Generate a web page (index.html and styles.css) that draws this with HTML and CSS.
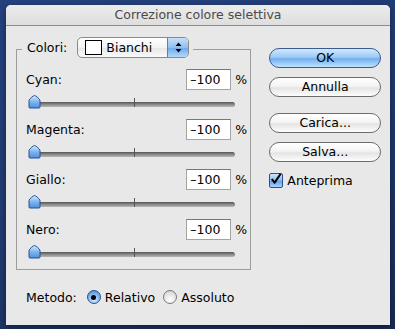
FILE: index.html
```html
<!DOCTYPE html>
<html lang="it">
<head>
  <meta charset="UTF-8">
  <meta name="viewport" content="width=device-width, initial-scale=1.0">
  <title>Correzione colore selettiva</title>
  <link rel="stylesheet" href="styles.css">
</head>
<body>
  <div class="finestra">
    <div class="barra-titolo">Correzione colore selettiva</div>
    <div class="contenuto">
      <div class="colonna-sinistra">
        <div class="gruppo">
          <div class="gruppo-testa">
            <span>Colori:</span>
            <div class="popup">
              <span class="campione"></span>
              <span class="popup-testo">Bianchi</span>
              <span class="popup-frecce">
                <svg width="7" height="11" viewBox="0 0 7 11"><path d="M3.5 0.5 L6.5 4 L0.5 4 Z M0.5 7 L6.5 7 L3.5 10.5 Z" fill="#000"/></svg>
              </span>
            </div>
          </div>

          <div class="riga">
            <div class="riga-alto"><span class="etichetta">Cyan:</span><span class="campo">–100</span><span class="perc">%</span></div>
            <div class="cursore"><span class="binario"></span><span class="tacca"></span><svg class="pomello" width="13" height="15" viewBox="0 0 13 15"><defs><linearGradient id="gb1" x1="0" y1="0" x2="0" y2="1"><stop offset="0" stop-color="#d6ebff"/><stop offset="0.5" stop-color="#7fb5ee"/><stop offset="1" stop-color="#4e8fe0"/></linearGradient></defs><path d="M6.5 1.5 C7.5 1.5 12 5 12 6.5 L12 13 Q12 14 11 14 L2 14 Q1 14 1 13 L1 6.5 C1 5 5.5 1.5 6.5 1.5 Z" fill="url(#gb1)" stroke="#2b4f8f" stroke-width="1"/></svg></div>
          </div>

          <div class="riga">
            <div class="riga-alto"><span class="etichetta">Magenta:</span><span class="campo">–100</span><span class="perc">%</span></div>
            <div class="cursore"><span class="binario"></span><span class="tacca"></span><svg class="pomello" width="13" height="15" viewBox="0 0 13 15"><path d="M6.5 1.5 C7.5 1.5 12 5 12 6.5 L12 13 Q12 14 11 14 L2 14 Q1 14 1 13 L1 6.5 C1 5 5.5 1.5 6.5 1.5 Z" fill="url(#gb1)" stroke="#2b4f8f" stroke-width="1"/></svg></div>
          </div>

          <div class="riga">
            <div class="riga-alto"><span class="etichetta">Giallo:</span><span class="campo">–100</span><span class="perc">%</span></div>
            <div class="cursore"><span class="binario"></span><span class="tacca"></span><svg class="pomello" width="13" height="15" viewBox="0 0 13 15"><path d="M6.5 1.5 C7.5 1.5 12 5 12 6.5 L12 13 Q12 14 11 14 L2 14 Q1 14 1 13 L1 6.5 C1 5 5.5 1.5 6.5 1.5 Z" fill="url(#gb1)" stroke="#2b4f8f" stroke-width="1"/></svg></div>
          </div>

          <div class="riga">
            <div class="riga-alto"><span class="etichetta">Nero:</span><span class="campo">–100</span><span class="perc">%</span></div>
            <div class="cursore"><span class="binario"></span><span class="tacca"></span><svg class="pomello" width="13" height="15" viewBox="0 0 13 15"><path d="M6.5 1.5 C7.5 1.5 12 5 12 6.5 L12 13 Q12 14 11 14 L2 14 Q1 14 1 13 L1 6.5 C1 5 5.5 1.5 6.5 1.5 Z" fill="url(#gb1)" stroke="#2b4f8f" stroke-width="1"/></svg></div>
          </div>
        </div>

        <div class="metodo">
          <span class="metodo-etichetta">Metodo:</span>
          <span class="radio attivo"><span class="punto"></span></span>
          <span class="radio-testo">Relativo</span>
          <span class="radio"></span>
          <span class="radio-testo">Assoluto</span>
        </div>
      </div>

      <div class="colonna-bottoni">
        <div class="bottone predefinito">OK</div>
        <div class="bottone">Annulla</div>
        <div class="bottone distanza">Carica...</div>
        <div class="bottone">Salva...</div>
        <div class="casella-riga">
          <span class="casella">
            <svg width="14" height="14" viewBox="0 0 14 14"><path d="M3 7 L6 11 L12.5 1.5" fill="none" stroke="#000" stroke-width="2.2" stroke-linejoin="round"/></svg>
          </span>
          <span>Anteprima</span>
        </div>
      </div>
    </div>
  </div>
</body>
</html>
```

FILE: styles.css
```css
body {
  margin: 0;
  padding: 5px 0 0 6px;
  min-height: 100vh;
  box-sizing: border-box;
  background: linear-gradient(160deg, #26427e, #203a70 50%, #1a2b55);
  font-family: "DejaVu Sans", sans-serif;
  font-size: 12.5px;
  color: #000;
  overflow: hidden;
}

.finestra {
  width: 384px;
  height: 320px;
  background: #e8e8e8;
  border-radius: 5px 5px 0 0;
  box-shadow: 0 2px 6px rgba(0, 0, 0, 0.45);
  overflow: hidden;
}

.barra-titolo {
  height: 20px;
  line-height: 20px;
  text-align: center;
  color: #4a4a4a;
  background: linear-gradient(#ececec, #dedede);
  border-bottom: 1px solid #8c8c8c;
}

.contenuto {
  display: flex;
  padding: 22px 9px 0 10px;
  gap: 18px;
}

.colonna-sinistra {
  width: 236px;
}

.gruppo {
  margin-top: 1px;
  height: 221px;
  box-sizing: border-box;
  border: 1px solid #9c9c9c;
  padding: 0 3px 0 9px;
}

.gruppo-testa {
  display: flex;
  width: fit-content;
  align-items: center;
  gap: 10px;
  height: 21px;
  margin: -13px 0 11px -4px;
  padding: 0 4px 0 5px;
  background: #e8e8e8;
}

.popup {
  display: flex;
  align-items: center;
  width: 112px;
  height: 21px;
  box-sizing: border-box;
  border: 1px solid #8a8a8a;
  border-radius: 5px;
  background: linear-gradient(#ffffff, #f3f3f3 50%, #e6e6e6 51%, #fafafa);
  overflow: hidden;
}

.campione {
  width: 15px;
  height: 13px;
  margin: 0 4px 0 7px;
  border: 1px solid #000;
  background: #fff;
}

.popup-testo {
  flex: 1;
}

.popup-frecce {
  display: flex;
  align-items: center;
  justify-content: center;
  width: 20px;
  height: 100%;
  border-left: 1px solid #5a7fb5;
  background: linear-gradient(#c6e0fa, #8fbff0 50%, #6aa8ec 51%, #b3d8fb);
}

.riga {
  height: 50px;
}

.riga-alto {
  display: flex;
  align-items: center;
  height: 21px;
}

.etichetta {
  flex: 1;
}

.campo {
  width: 45px;
  height: 21px;
  box-sizing: border-box;
  padding-left: 3px;
  line-height: 19px;
  background: #fff;
  border: 1px solid #a4a4a4;
  border-top-color: #777;
}

.perc {
  width: 12px;
  margin-left: 4px;
}

.cursore {
  position: relative;
  height: 20px;
  margin-top: 4px;
}

.binario {
  position: absolute;
  left: 4px;
  top: 8px;
  width: 205px;
  height: 5px;
  box-sizing: border-box;
  border-radius: 3px;
  background: linear-gradient(#555, #8a8a8a 50%, #b8b8b8);
}

.tacca {
  position: absolute;
  left: 108px;
  top: 4px;
  width: 1px;
  height: 9px;
  background: #555;
}

.pomello {
  position: absolute;
  left: 2px;
  top: 0;
}

.metodo {
  display: flex;
  align-items: center;
  height: 20px;
  margin: 17px 0 0 10px;
}

.metodo-etichetta {
  margin-right: 10px;
}

.radio {
  display: flex;
  align-items: center;
  justify-content: center;
  width: 14px;
  height: 14px;
  box-sizing: border-box;
  border-radius: 50%;
  border: 1px solid #7a7a7a;
  background: radial-gradient(circle at 50% 75%, #ffffff, #e2e2e2 60%, #c4c4c4);
  margin-right: 4px;
}

.radio.attivo {
  border-color: #2c4f8c;
  background: radial-gradient(circle at 50% 75%, #d4ecff, #7fb5ee 55%, #3f7fd6);
}

.punto {
  width: 5px;
  height: 5px;
  border-radius: 50%;
  background: #000;
}

.radio-testo {
  margin-right: 8px;
}

.colonna-bottoni {
  width: 112px;
  display: flex;
  flex-direction: column;
}

.bottone {
  height: 20px;
  box-sizing: border-box;
  border: 1px solid #6c6c6c;
  border-radius: 10px;
  line-height: 18px;
  text-align: center;
  background: linear-gradient(#ffffff, #f4f4f4 45%, #e4e4e4 55%, #fdfdfd);
  margin-bottom: 9px;
}

.bottone.predefinito {
  border-color: #3a5b92;
  background: linear-gradient(#d2e8fd, #9ccaf6 45%, #72b0f0 55%, #bfe2fd);
}

.bottone.distanza {
  margin-top: 7px;
}

.casella-riga {
  display: flex;
  align-items: center;
  gap: 4px;
  margin-top: 2px;
}

.casella {
  display: flex;
  width: 14px;
  height: 15px;
  box-sizing: border-box;
  border: 1px solid #2c4f8c;
  border-radius: 2px;
  background: linear-gradient(#cfe7fd, #86bbf1 50%, #5c9ee9 51%, #a9d3fb);
  overflow: visible;
}

.casella svg {
  margin: -2px 0 0 -1px;
}
```
